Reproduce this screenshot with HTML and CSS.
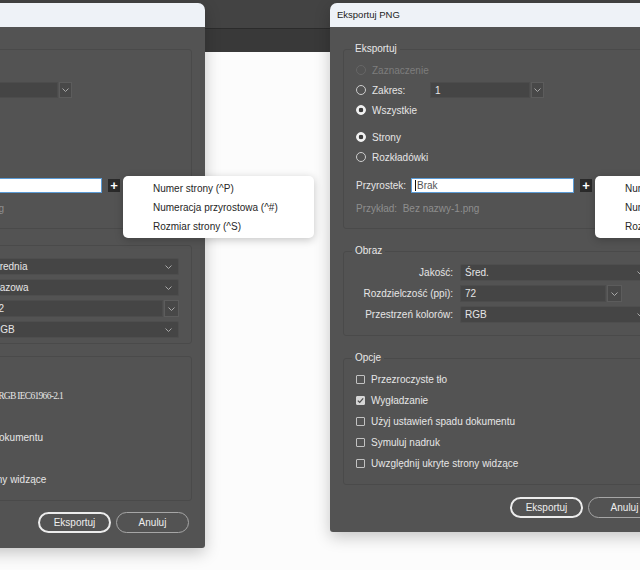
FILE: index.html
```html
<!DOCTYPE html>
<html lang="pl">
<head>
    <meta charset="UTF-8">
    <meta name="viewport" content="width=device-width, initial-scale=1.0">
    <title>Eksportuj PNG</title>
    <link rel="stylesheet" href="styles.css">
</head>
<body>
    <div class="desk">
        <!-- JPEG export dialog (cut off on the left) -->
        <div class="dialog dialog-jpeg">
            <div class="titlebar">Eksportuj JPEG</div>
            <div class="dialog-body">
                <fieldset class="group">
                    <legend>Eksportuj</legend>
                    <div class="row disabled"><span class="radio"></span>Zaznaczenie</div>
                    <div class="row">
                        <span class="radio"></span><span class="range-label">Zakres:</span>
                        <div class="combo range">
                            <span class="field">1</span>
                            <span class="arrow-box"><svg width="7" height="4" viewBox="0 0 7 4"><path d="M0.5 0.5 L3.5 3.5 L6.5 0.5" stroke="#a8a8a8" fill="none"/></svg></span>
                        </div>
                    </div>
                    <div class="row"><span class="radio checked"></span>Wszystkie</div>
                    <div class="row gap-top"><span class="radio checked"></span>Strony</div>
                    <div class="row"><span class="radio"></span>Rozkładówki</div>
                    <div class="row suffix-row">
                        <span class="suffix-label">Przyrostek:</span>
                        <div class="suffix-input"><span class="caret"></span>Brak</div>
                        <div class="plus-wrap">
                            <span class="plus-btn">+</span>
                            <div class="menu">
                                <div class="menu-item">Numer strony (^P)</div>
                                <div class="menu-item">Numeracja przyrostowa (^#)</div>
                                <div class="menu-item">Rozmiar strony (^S)</div>
                            </div>
                        </div>
                    </div>
                    <div class="row example">Przykład:&nbsp; Bez nazwy-1.jpg</div>
                </fieldset>

                <fieldset class="group image-group">
                    <legend>Obraz</legend>
                    <div class="form-grid">
                        <span class="label">Jakość:</span>
                        <div class="select"><span>Średnia</span><svg width="7" height="4" viewBox="0 0 7 4"><path d="M0.5 0.5 L3.5 3.5 L6.5 0.5" stroke="#a8a8a8" fill="none"/></svg></div>
                        <span class="label">Metoda formatowania:</span>
                        <div class="select"><span>Bazowa</span><svg width="7" height="4" viewBox="0 0 7 4"><path d="M0.5 0.5 L3.5 3.5 L6.5 0.5" stroke="#a8a8a8" fill="none"/></svg></div>
                        <span class="label">Rozdzielczość (ppi):</span>
                        <div class="combo">
                            <span class="field">72</span>
                            <span class="arrow-box"><svg width="7" height="4" viewBox="0 0 7 4"><path d="M0.5 0.5 L3.5 3.5 L6.5 0.5" stroke="#a8a8a8" fill="none"/></svg></span>
                        </div>
                        <span class="label">Przestrzeń kolorów:</span>
                        <div class="select"><span>RGB</span><svg width="7" height="4" viewBox="0 0 7 4"><path d="M0.5 0.5 L3.5 3.5 L6.5 0.5" stroke="#a8a8a8" fill="none"/></svg></div>
                    </div>
                </fieldset>

                <fieldset class="group options-group">
                    <legend>Opcje</legend>
                    <div class="row tall"><span class="check"></span>Progresywne</div>
                    <div class="row tall"><span class="check"></span>Osadź profil koloru:<span class="profile">sRGB IEC61966-2.1</span></div>
                    <div class="row tall"><span class="check checked"><svg width="7" height="7" viewBox="0 0 7 7"><path d="M0.8 3.6 L2.7 5.4 L6.2 1.4" stroke="#4a4a4a" stroke-width="1.3" fill="none"/></svg></span>Wygładzanie</div>
                    <div class="row tall"><span class="check"></span>Użyj ustawień spadu dokumentu</div>
                    <div class="row tall"><span class="check"></span>Symuluj nadruk</div>
                    <div class="row tall"><span class="check"></span>Uwzględnij ukryte strony widzące</div>
                </fieldset>

                <div class="buttons">
                    <button class="btn primary">Eksportuj</button>
                    <button class="btn">Anuluj</button>
                </div>
            </div>
        </div>

        <!-- PNG export dialog -->
        <div class="dialog dialog-png">
            <div class="titlebar">Eksportuj PNG</div>
            <div class="dialog-body">
                <fieldset class="group">
                    <legend>Eksportuj</legend>
                    <div class="row disabled"><span class="radio"></span>Zaznaczenie</div>
                    <div class="row">
                        <span class="radio"></span><span class="range-label">Zakres:</span>
                        <div class="combo range">
                            <span class="field">1</span>
                            <span class="arrow-box"><svg width="7" height="4" viewBox="0 0 7 4"><path d="M0.5 0.5 L3.5 3.5 L6.5 0.5" stroke="#a8a8a8" fill="none"/></svg></span>
                        </div>
                    </div>
                    <div class="row"><span class="radio checked"></span>Wszystkie</div>
                    <div class="row gap-top"><span class="radio checked"></span>Strony</div>
                    <div class="row"><span class="radio"></span>Rozkładówki</div>
                    <div class="row suffix-row">
                        <span class="suffix-label">Przyrostek:</span>
                        <div class="suffix-input"><span class="caret"></span>Brak</div>
                        <div class="plus-wrap">
                            <span class="plus-btn">+</span>
                            <div class="menu">
                                <div class="menu-item">Numer strony (^P)</div>
                                <div class="menu-item">Numeracja przyrostowa (^#)</div>
                                <div class="menu-item">Rozmiar strony (^S)</div>
                            </div>
                        </div>
                    </div>
                    <div class="row example">Przykład:&nbsp; Bez nazwy-1.png</div>
                </fieldset>

                <fieldset class="group">
                    <legend>Obraz</legend>
                    <div class="form-grid">
                        <span class="label">Jakość:</span>
                        <div class="select"><span>Śred.</span><svg width="7" height="4" viewBox="0 0 7 4"><path d="M0.5 0.5 L3.5 3.5 L6.5 0.5" stroke="#a8a8a8" fill="none"/></svg></div>
                        <span class="label">Rozdzielczość (ppi):</span>
                        <div class="combo res">
                            <span class="field">72</span>
                            <span class="arrow-box"><svg width="7" height="4" viewBox="0 0 7 4"><path d="M0.5 0.5 L3.5 3.5 L6.5 0.5" stroke="#a8a8a8" fill="none"/></svg></span>
                        </div>
                        <span class="label">Przestrzeń kolorów:</span>
                        <div class="select"><span>RGB</span><svg width="7" height="4" viewBox="0 0 7 4"><path d="M0.5 0.5 L3.5 3.5 L6.5 0.5" stroke="#a8a8a8" fill="none"/></svg></div>
                    </div>
                </fieldset>

                <fieldset class="group options">
                    <legend>Opcje</legend>
                    <div class="row tall"><span class="check"></span>Przezroczyste tło</div>
                    <div class="row tall"><span class="check checked"><svg width="7" height="7" viewBox="0 0 7 7"><path d="M0.8 3.6 L2.7 5.4 L6.2 1.4" stroke="#4a4a4a" stroke-width="1.3" fill="none"/></svg></span>Wygładzanie</div>
                    <div class="row tall"><span class="check"></span>Użyj ustawień spadu dokumentu</div>
                    <div class="row tall"><span class="check"></span>Symuluj nadruk</div>
                    <div class="row tall"><span class="check"></span>Uwzględnij ukryte strony widzące</div>
                </fieldset>

                <div class="buttons">
                    <button class="btn primary">Eksportuj</button>
                    <button class="btn">Anuluj</button>
                </div>
            </div>
        </div>
    </div>
</body>
</html>
```

FILE: styles.css
```css
* {
    box-sizing: border-box;
}

body {
    margin: 0;
    width: 640px;
    height: 570px;
    overflow: hidden;
    font-family: "Liberation Sans", Arial, sans-serif;
    font-size: 10px;
    color: #e6e6e6;
    background: linear-gradient(#434343 0, #434343 28px, #2b2b2b 28px, #2b2b2b 29px, #393939 29px, #393939 52px, #fcfcfc 52px);
}

.desk {
    display: flex;
    align-items: flex-start;
    gap: 125px;
    padding-top: 3px;
    margin-left: -142px;
}

.dialog {
    flex: none;
    width: 347px;
    background: #535353;
    border-radius: 7px 7px 3px 3px;
    box-shadow: 0 5px 16px rgba(0, 0, 0, 0.22);
}

.titlebar {
    height: 24px;
    line-height: 24px;
    padding-left: 7px;
    background: #eef2f7;
    color: #1c1c1c;
    font-size: 9.5px;
    border-radius: 7px 7px 0 0;
}

.dialog-body {
    padding: 16px 13px 14px;
}

.dialog-jpeg .dialog-body {
    padding-bottom: 15px;
}

.group {
    margin: 0;
    min-width: 0;
    padding: 5px 12px 10px;
    border: 1px solid #4a4a4a;
    border-radius: 3px;
}

.group + .group {
    margin-top: 16px;
}

.group legend {
    padding: 0 3px;
    margin-left: -4px;
    line-height: 12px;
    color: #e8e8e8;
}

/* the JPEG dialog is a bit tighter */
.dialog-jpeg .image-group {
    margin-top: 10px;
    padding-bottom: 3px;
}

.dialog-jpeg .options-group {
    margin-top: 6px;
    padding-top: 2px;
}

.row {
    display: flex;
    align-items: center;
    height: 20px;
    white-space: nowrap;
}

.row.tall {
    height: 21px;
}

.row.gap-top {
    margin-top: 7px;
}

.row.disabled {
    color: #7d7d7d;
}

.radio {
    flex: none;
    width: 10px;
    height: 10px;
    margin-right: 6px;
    border: 1px solid #cdcdcd;
    border-radius: 50%;
}

.disabled .radio {
    border-color: #666;
}

.radio.checked {
    border-color: #f0f0f0;
    background: radial-gradient(circle, #3b3b3b 0, #3b3b3b 2px, #f0f0f0 2.6px);
}

.range-label {
    width: 58px;
}

.combo {
    display: flex;
    height: 17px;
}

.combo.range {
    width: 114px;
    height: 16px;
}

.combo.res {
    width: 162px;
}

.combo .field {
    flex: 1;
    display: flex;
    align-items: center;
    padding-left: 4px;
    background: #454545;
    border: 1px solid #4c4c4c;
}

.arrow-box {
    flex: none;
    width: 15px;
    display: flex;
    align-items: center;
    justify-content: center;
    margin-left: 1px;
    background: #484848;
    border: 1px solid #5c5c5c;
}

.range .arrow-box {
    width: 13px;
}

.select {
    display: flex;
    align-items: center;
    justify-content: space-between;
    height: 17px;
    padding: 0 6px 0 4px;
    background: #454545;
    border: 1px solid #4e4e4e;
    border-radius: 2px;
}

.suffix-row {
    margin-top: 8px;
}

.suffix-label {
    width: 55px;
}

.suffix-input {
    display: flex;
    align-items: center;
    width: 163px;
    height: 15px;
    padding-left: 3px;
    background: #fff;
    border: 1px solid #5b9bd5;
    color: #555;
}

.caret {
    width: 1px;
    height: 11px;
    margin-right: 1px;
    background: #111;
}

.plus-wrap {
    position: relative;
    margin-left: 6px;
}

.plus-btn {
    display: block;
    width: 12px;
    height: 13px;
    line-height: 13px;
    text-align: center;
    background: #2a2a2a;
    color: #fff;
    font-size: 13px;
    font-weight: bold;
}

.menu {
    position: absolute;
    left: 15px;
    top: -3px;
    z-index: 2;
    width: 191px;
    padding: 3px 0 2px;
    background: #fff;
    border-radius: 5px;
    box-shadow: 0 2px 8px rgba(0, 0, 0, 0.22);
    color: #262626;
}

.menu-item {
    line-height: 19px;
    padding-left: 30px;
}

.row.example {
    margin-top: 3px;
    color: #8e8e8e;
}

.form-grid {
    display: grid;
    grid-template-columns: 97px 1fr;
    grid-auto-rows: 21px;
    column-gap: 7px;
    align-items: center;
}

.form-grid .label {
    text-align: right;
    white-space: nowrap;
}

.check {
    flex: none;
    display: flex;
    align-items: center;
    justify-content: center;
    width: 9px;
    height: 9px;
    margin-right: 6px;
    border: 1px solid #c2c2c2;
    border-radius: 1px;
}

.check.checked {
    background: #d6d6d6;
    border-color: #d6d6d6;
}

.profile {
    margin-left: 10px;
    font-family: "Liberation Serif", "Times New Roman", serif;
    font-size: 9.5px;
    letter-spacing: -0.7px;
}

.buttons {
    display: flex;
    justify-content: flex-end;
    gap: 5px;
    margin-top: 12px;
    padding-right: 3px;
}

.dialog-jpeg .buttons {
    margin-top: 11px;
}

.btn {
    width: 73px;
    height: 21px;
    padding: 0;
    background: transparent;
    border: 1px solid #a6a6a6;
    border-radius: 11px;
    color: #eee;
    font-family: inherit;
    font-size: 10px;
}

.btn.primary {
    border: 2px solid #ececec;
}
```
